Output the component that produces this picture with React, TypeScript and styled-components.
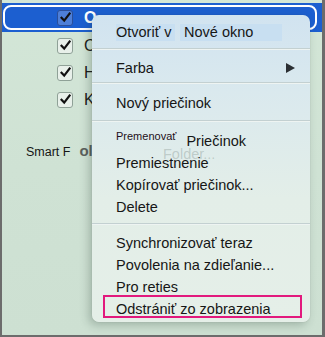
import React, {FunctionComponent} from 'react';
import styled, {createGlobalStyle} from 'styled-components';

const GlobalStyle = createGlobalStyle`
  html, body {
    margin: 0;
    padding: 0;
    background: #ffffff;
  }
  body {
    font-family: "Liberation Sans", Arial, sans-serif;
  }
`;

const Frame = styled.div`
  position: relative;
  width: 325px;
  height: 337px;
  box-sizing: border-box;
  border-left: 2px solid #6c6c6c;
  border-right: 3px solid #6c6c6c;
  border-bottom: 2px solid #6c6c6c;
  background: linear-gradient(180deg, #d3e6d7 0%, #cfe2d4 50%, #cde0d2 100%);
  overflow: hidden;
`;

const FolderList = styled.div`
  display: flex;
  flex-direction: column;
  padding-top: 3px;
`;

const SelectedRow = styled.div`
  height: 29px;
  background: #1c5fd0;
  padding: 2px 5px 2px 1px;
  box-sizing: border-box;
  display: flex;
`;

const SelectedOutline = styled.div`
  flex: 1;
  display: flex;
  align-items: center;
  padding-left: 52px;
  border: 2px solid #ffffff;
  border-radius: 8px;
`;

const Row = styled.div`
  height: 27px;
  display: flex;
  align-items: center;
  padding-left: 55px;
`;

const Check = styled.span<{$selected?: boolean}>`
  width: 14px;
  height: 14px;
  border-radius: 3px;
  border: 1px solid ${({$selected}) => ($selected ? '#2a4f9a' : '#8fa197')};
  background: ${({$selected}) => ($selected ? '#4d7fd8' : '#e8f0ea')};
  display: flex;
  align-items: center;
  justify-content: center;
  flex-shrink: 0;
`;

const RowLabel = styled.span<{$selected?: boolean}>`
  margin-left: 11px;
  font-size: 16px;
  font-weight: ${({$selected}) => ($selected ? 700 : 400)};
  color: ${({$selected}) => ($selected ? '#ffffff' : '#1b1b1b')};
`;

const SmartRow = styled.div`
  display: flex;
  align-items: baseline;
  padding: 29px 0 0 24px;
`;

const SmartText = styled.span`
  font-size: 12.5px;
  color: #151515;
`;

const SmartBold = styled.span`
  margin-left: 9px;
  font-size: 15px;
  font-weight: 700;
  color: #5b605c;
`;

const Menu = styled.div`
  position: absolute;
  left: 90px;
  top: 15px;
  width: 218px;
  border-radius: 7px;
  background: linear-gradient(180deg, #d1e3f0 0%, #dae9ee 25%, #e3eee8 60%, #e5efe8 100%);
  box-shadow: -3px 3px 10px rgba(40, 60, 50, 0.28), 0 0 1px rgba(0, 0, 0, 0.25);
  display: flex;
  flex-direction: column;
`;

const Group = styled.div<{$top: number; $bottom: number}>`
  display: flex;
  flex-direction: column;
  padding: ${({$top, $bottom}) => `${$top}px 0 ${$bottom}px`};
`;

const Separator = styled.div`
  height: 1px;
  background: #c3d0d1;
  border-bottom: 1px solid #eef4f2;
`;

const Item = styled.div`
  position: relative;
  height: 22px;
  display: flex;
  align-items: center;
  padding-left: 24px;
  padding-right: 14px;
  font-size: 14.5px;
  color: #161616;
  white-space: nowrap;
`;

const Highlight = styled.span<{$width: number}>`
  display: inline-block;
  width: ${({$width}) => $width}px;
  line-height: 17px;
  background: #c8dff1;
`;

const Gap = styled.span`
  display: inline-block;
  width: 5px;
`;

const Arrow = styled.span`
  margin-left: auto;
  margin-right: 1px;
  width: 0;
  height: 0;
  border-top: 5px solid transparent;
  border-bottom: 5px solid transparent;
  border-left: 9px solid #2b2f33;
`;

const Small = styled.span`
  font-size: 11px;
  position: relative;
  top: -5px;
  color: #1e1020;
`;

const Trailing = styled.span`
  margin-left: 10px;
`;

const Ghost = styled.span`
  position: absolute;
  left: 71px;
  top: -6px;
  font-size: 14.5px;
  color: rgba(110, 125, 118, 0.3);
`;

const Marked = styled.span`
  position: absolute;
  left: 11px;
  top: -3px;
  width: 199px;
  height: 23px;
  box-sizing: border-box;
  border: 2px solid #e2197d;
`;

const CheckIcon: FunctionComponent = () => (
  <svg width="11" height="11" viewBox="0 0 11 11">
    <path d="M1.5 5.8 L4.2 8.6 L9.6 1.6" fill="none" stroke="#111" strokeWidth="2.2" strokeLinecap="square" />
  </svg>
);

const rows = ['C', 'H', 'K'];

const App: FunctionComponent = () => {
  return (
    <>
      <GlobalStyle />
      <Frame>
        <FolderList>
          <SelectedRow>
            <SelectedOutline>
              <Check $selected>
                <CheckIcon />
              </Check>
              <RowLabel $selected>O</RowLabel>
            </SelectedOutline>
          </SelectedRow>
          {rows.map((r) => (
            <Row key={r}>
              <Check>
                <CheckIcon />
              </Check>
              <RowLabel>{r}</RowLabel>
            </Row>
          ))}
          <SmartRow>
            <SmartText>Smart F</SmartText>
            <SmartBold>ol</SmartBold>
          </SmartRow>
        </FolderList>

        <Menu>
          <Group $top={6} $bottom={5}>
            <Item>
              <Highlight $width={59}>Otvoriť v</Highlight>
              <Gap />
              <Highlight $width={102}>&nbsp;Nové okno</Highlight>
            </Item>
          </Group>
          <Separator />
          <Group $top={7} $bottom={3}>
            <Item>
              Farba
              <Arrow />
            </Item>
          </Group>
          <Separator />
          <Group $top={8} $bottom={6}>
            <Item>Nový priečinok</Item>
          </Group>
          <Separator />
          <Group $top={8} $bottom={5}>
            <Item>
              <Small>Premenovať</Small>
              <Trailing>Priečinok</Trailing>
            </Item>
            <Item>
              <Ghost>Folder...</Ghost>
              Premiestnenie
            </Item>
            <Item>Kopírovať priečinok...</Item>
            <Item>Delete</Item>
          </Group>
          <Separator />
          <Group $top={7} $bottom={2}>
            <Item>Synchronizovať teraz</Item>
            <Item>Povolenia na zdieľanie...</Item>
            <Item>Pro reties</Item>
            <Item>
              <Marked />
              Odstrániť zo zobrazenia
            </Item>
          </Group>
        </Menu>
      </Frame>
    </>
  );
};

export default App;
